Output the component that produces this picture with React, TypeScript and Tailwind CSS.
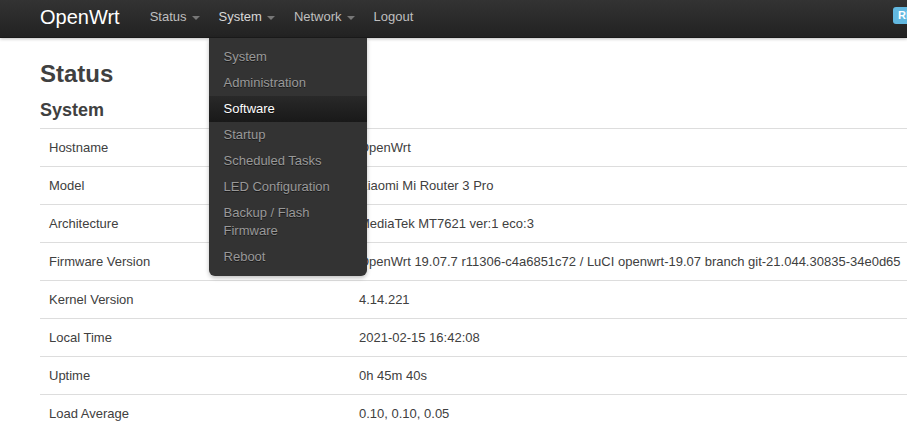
import React from 'react';

const navItems = [
  { label: 'Status', dropdown: true },
  { label: 'System', dropdown: true, open: true },
  { label: 'Network', dropdown: true },
  { label: 'Logout', dropdown: false },
];

const systemMenu = [
  'System',
  'Administration',
  'Software',
  'Startup',
  'Scheduled Tasks',
  'LED Configuration',
  'Backup / Flash Firmware',
  'Reboot',
];

const rows: [string, string][] = [
  ['Hostname', 'OpenWrt'],
  ['Model', 'Xiaomi Mi Router 3 Pro'],
  ['Architecture', 'MediaTek MT7621 ver:1 eco:3'],
  ['Firmware Version', 'OpenWrt 19.07.7 r11306-c4a6851c72 / LuCI openwrt-19.07 branch git-21.044.30835-34e0d65'],
  ['Kernel Version', '4.14.221'],
  ['Local Time', '2021-02-15 16:42:08'],
  ['Uptime', '0h 45m 40s'],
  ['Load Average', '0.10, 0.10, 0.05'],
];

export default function App() {
  return (
    <div className="relative w-[907px] h-[428px] overflow-hidden bg-white text-[13px] leading-[18px] text-[#404040] font-['Liberation_Sans',Arial,sans-serif]">
      {/* Top bar */}
      <header className="relative z-10 h-[38px] bg-gradient-to-b from-[#333] to-[#222] border-b border-[#1a1a1a] shadow-[0_1px_3px_rgba(0,0,0,0.25)]">
        <div className="flex items-center h-full pl-[40px]">
          <span className="text-[20px] leading-[24px] text-white mr-[20px] mt-[-3px]">OpenWrt</span>
          <nav className="flex h-full">
            {navItems.map((item) => (
              <div key={item.label} className="relative h-full">
                <a
                  className={
                    'relative flex items-center h-full pl-[10px] pb-[3px] ' +
                    (item.dropdown ? 'pr-[22px] ' : 'pr-[10px] ') +
                    (item.open ? 'text-[#d8d8d8]' : 'text-[#bfbfbf]')
                  }
                >
                  {item.label}
                  {item.dropdown && (
                    <span className="absolute right-[9px] top-[16px] w-0 h-0 border-x-[4px] border-x-transparent border-t-[4px] border-t-[#777]" />
                  )}
                </a>
                {item.open && (
                  <ul className="absolute left-0 top-[38px] w-[158px] bg-[#333] rounded-b-[6px] py-[6px] shadow-[0_2px_4px_rgba(0,0,0,0.25)]">
                    {systemMenu.map((entry) => (
                      <li
                        key={entry}
                        className={
                          'px-[15px] py-[4px] leading-[18px] [text-shadow:0_1px_0_rgba(0,0,0,0.5)] ' +
                          (entry === 'Software'
                            ? 'bg-gradient-to-b from-[#292929] to-[#191919] text-white'
                            : 'text-[#999]')
                        }
                      >
                        {entry}
                      </li>
                    ))}
                  </ul>
                )}
              </div>
            ))}
          </nav>
          <span className="absolute left-[893px] top-[7px] h-[17px] pl-[5px] pr-[4px] rounded-[3px] bg-[#62b8e0] text-white text-[11px] leading-[17px] font-bold whitespace-nowrap uppercase">
            Refreshing
          </span>
        </div>
      </header>

      {/* Content */}
      <main className="pl-[40px]">
        <h2 className="mt-[18px] h-[36px] text-[24px] leading-[36px] font-bold">Status</h2>
        <h3 className="mt-[4px] h-[28px] text-[18px] leading-[28px] font-bold">System</h3>
        <div className="mt-[4px] w-[1000px]">
          {rows.map(([label, value]) => (
            <div key={label} className="grid grid-cols-[310px_1fr] h-[38px] border-t border-[#ddd]">
              <div className="pl-[9px] pt-[10px]">{label}</div>
              <div className="pl-[9px] pt-[10px] whitespace-nowrap">{value}</div>
            </div>
          ))}
        </div>
      </main>
    </div>
  );
}
